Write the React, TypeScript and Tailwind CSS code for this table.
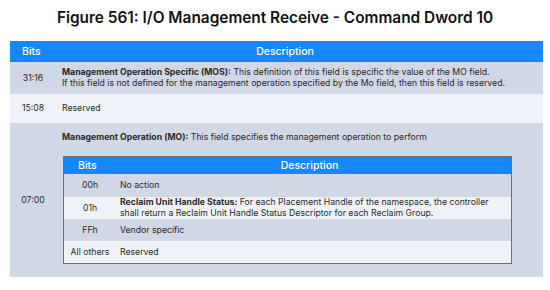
const font = { fontFamily: '"Inter", "Liberation Sans", sans-serif' };

const innerRows = [
    { bits: '00h', desc: <>No action</>, h: 'h-[23px]', bg: 'bg-[#d0d7e5]' },
    {
        bits: '01h',
        desc: (
            <>
                <b className="font-bold">Reclaim Unit Handle Status:</b> For each Placement Handle of the namespace, the controller
                <br />
                shall return a Reclaim Unit Handle Status Descriptor for each Reclaim Group.
            </>
        ),
        h: 'h-[22px]',
        bg: 'bg-[#eff3f9]',
    },
    { bits: 'FFh', desc: <>Vendor specific</>, h: 'h-[22px]', bg: 'bg-[#d0d7e5]' },
    { bits: 'All others', desc: <>Reserved</>, h: 'h-[22px]', bg: 'bg-[#eff3f9]' },
];

const App = () => {
    return (
        <div className="w-[550px] h-[290px] bg-white text-[#2a2a2a]" style={font}>
            <h1 className="h-[41px] pt-[6px] text-center text-[15.4px] font-semibold text-[#111]">
                Figure 561: I/O Management Receive - Command Dword 10
            </h1>

            <div className="ml-[10px] w-[533px] text-[8.7px] leading-[11px]">
                {/* header */}
                <div className="grid grid-cols-[46px_1fr] h-[21px] bg-[#1488fc] text-white text-[10.5px] font-medium items-center">
                    <div className="pl-[12px]">Bits</div>
                    <div className="text-center pr-[29px]">Description</div>
                </div>

                <div className="grid grid-cols-[46px_1fr] h-[32px] bg-[#d0d7e5] items-center">
                    <div className="text-center">31:16</div>
                    <div className="pl-[6px]">
                        <b className="font-bold">Management Operation Specific (MOS):</b> This definition of this field is specific the value of the MO field.
                        <br />
                        If this field is not defined for the management operation specified by the Mo field, then this field is reserved.
                    </div>
                </div>

                <div className="grid grid-cols-[46px_1fr] h-[29px] bg-[#eff3f9] items-center">
                    <div className="text-center">15:08</div>
                    <div className="pl-[6px]">Reserved</div>
                </div>

                <div className="grid grid-cols-[46px_1fr] h-[154px] bg-[#d0d7e5]">
                    <div className="flex items-center justify-center">07:00</div>
                    <div className="pl-[6px] pt-[9px]">
                        <div>
                            <b className="font-bold">Management Operation (MO):</b> This field specifies the management operation to perform
                        </div>
                        <div className="mt-[13px] ml-[1px] w-[449px] border border-[#6b6f78]">
                            <div className="grid grid-cols-[52px_1fr] h-[17px] bg-[#1488fc] text-white text-[10.5px] font-medium items-center">
                                <div className="pl-[14px]">Bits</div>
                                <div className="text-center pr-[8px]">Description</div>
                            </div>
                            {innerRows.map((r) => (
                                <div key={r.bits} className={`grid grid-cols-[52px_1fr] items-center ${r.h} ${r.bg}`}>
                                    <div className="text-center">{r.bits}</div>
                                    <div className="pl-[4px]">{r.desc}</div>
                                </div>
                            ))}
                        </div>
                    </div>
                </div>
            </div>
        </div>
    );
};

export default App;
